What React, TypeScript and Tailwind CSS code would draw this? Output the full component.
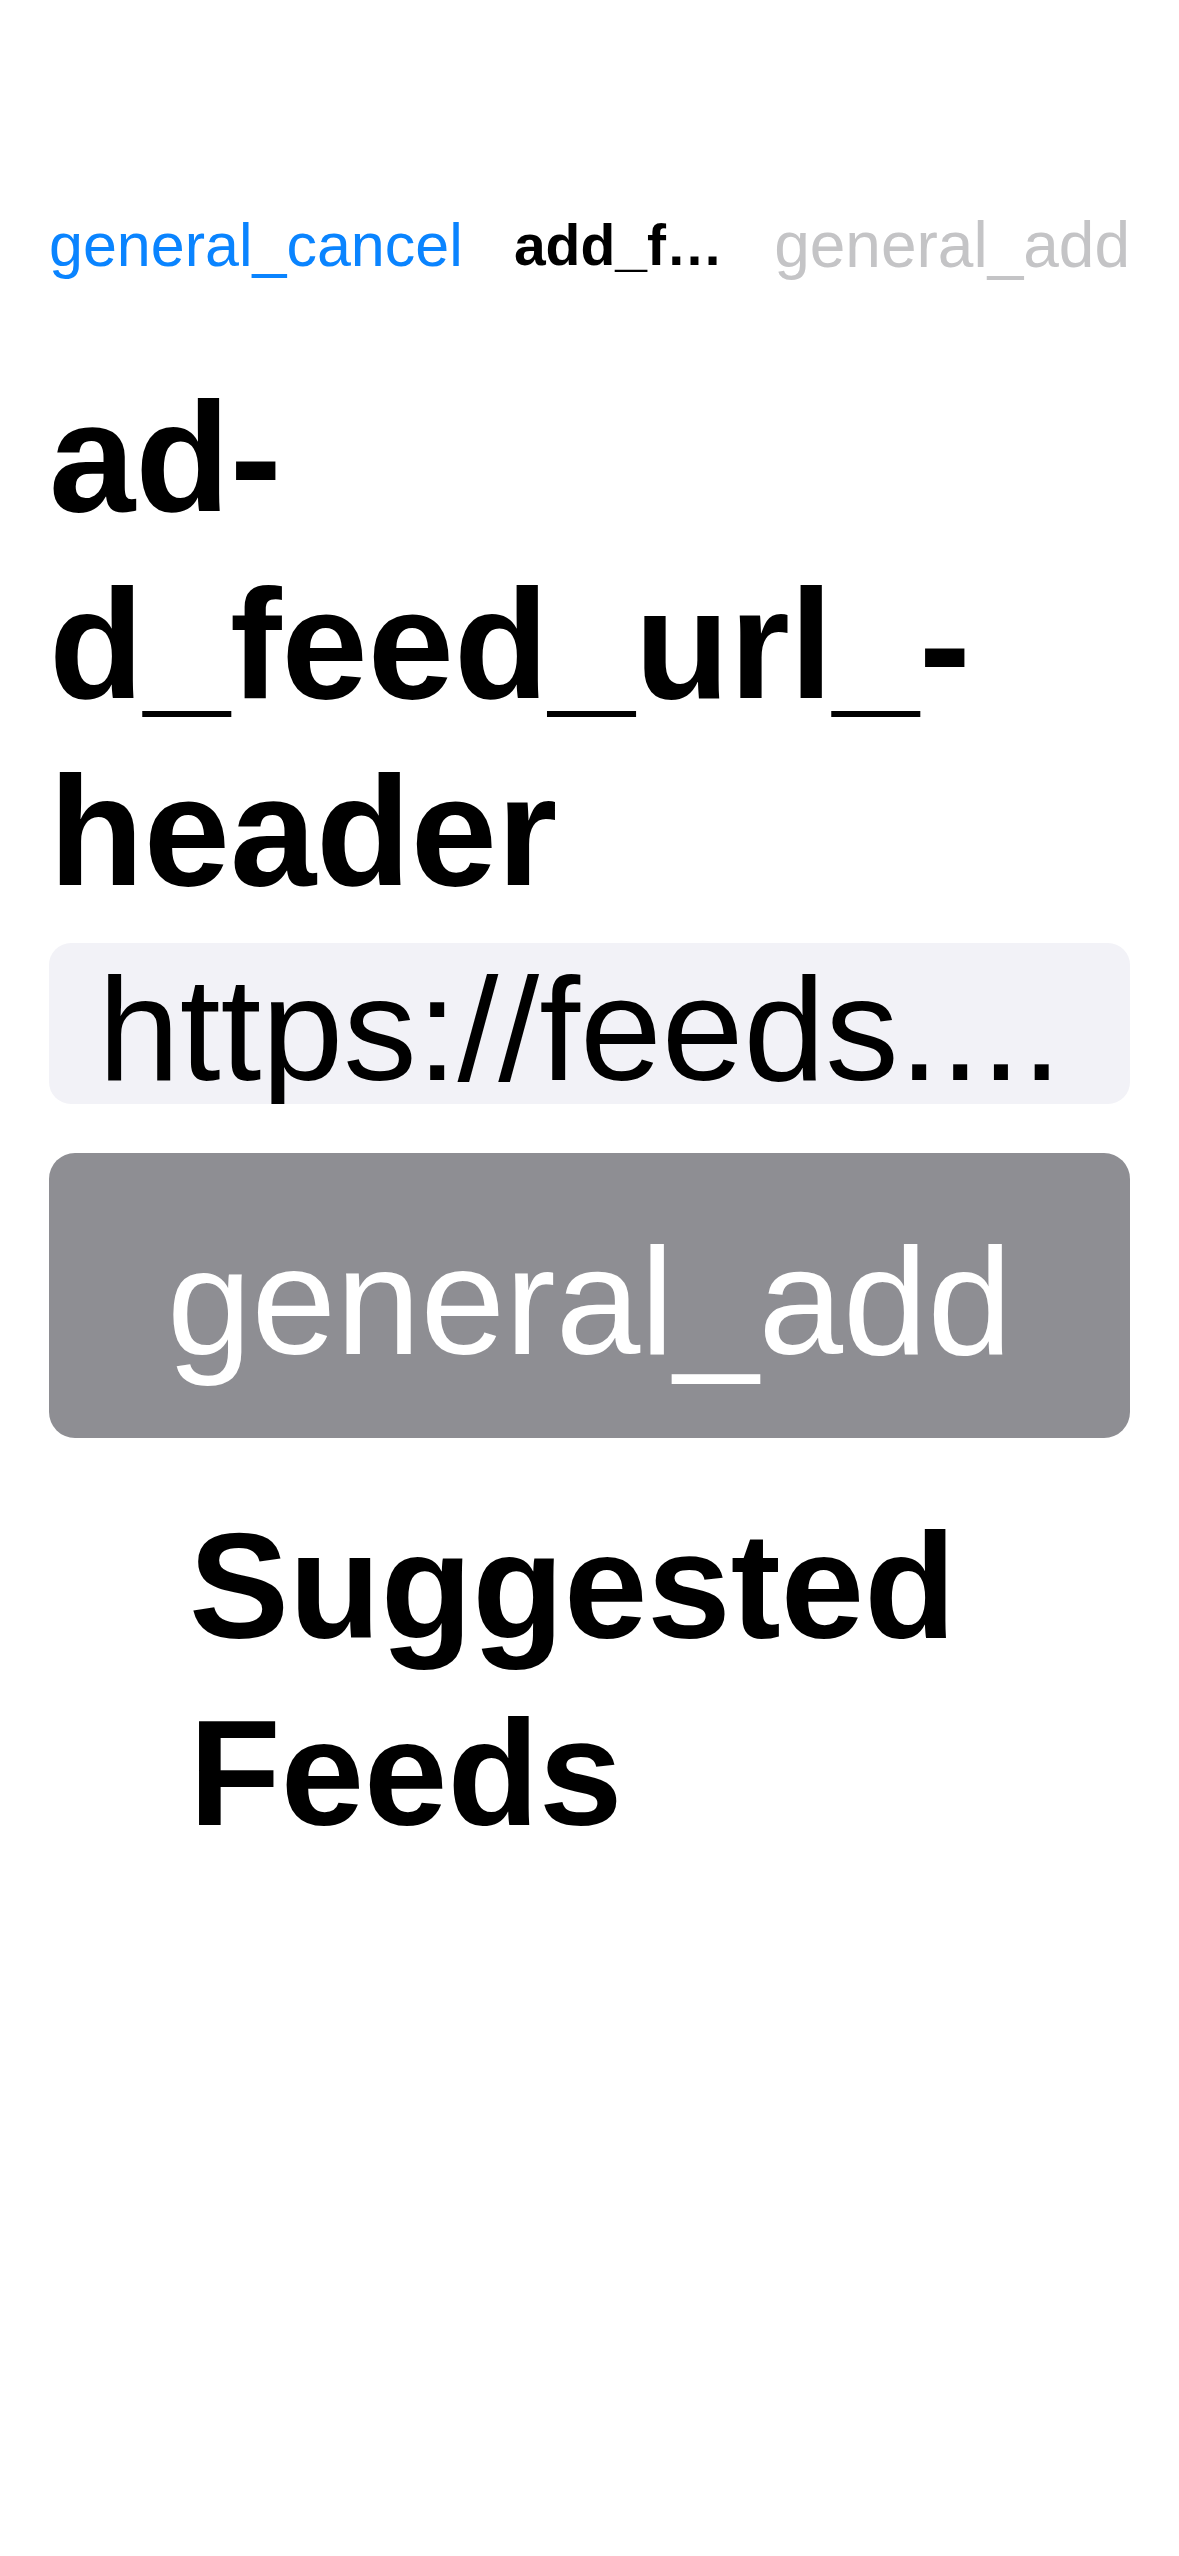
export default function App() {
  return (
    <div className="min-h-[2556px] w-[1179px] bg-white pt-[208px] font-['Liberation_Sans',Arial,sans-serif] text-black">
      <nav className="flex h-[74px] items-center justify-between px-[49px] text-[61px] leading-[74px]">
        <button type="button" className="text-[#0a84ff]">
          general_cancel
        </button>
        <span className="text-[57px] font-bold">add_f…</span>
        <button type="button" className="text-[64px] text-[#c4c4c6]" disabled>
          general_add
        </button>
      </nav>

      <h1 className="mt-[82px] px-[49px] text-[155px] font-bold leading-[187px]">
        ad-
        <br />
        d_feed_url_-
        <br />
        header
      </h1>

      <div className="mx-[49px] mt-[18px] h-[161px] overflow-hidden rounded-[22px] bg-[#f2f2f7] pl-[49px] pt-[11px]">
        <div className="whitespace-nowrap text-[147px] leading-[150px]">https://feeds....</div>
      </div>

      <button
        type="button"
        className="mx-[49px] mt-[49px] flex h-[285px] w-[1081px] items-center justify-center rounded-[26px] bg-[#8e8e93] pt-[10px] text-[152px] leading-[152px] text-white"
      >
        general_add
      </button>

      <h2 className="mt-[55px] pl-[189px] text-[150px] font-bold leading-[187px]">
        Suggested
        <br />
        Feeds
      </h2>
    </div>
  );
}
